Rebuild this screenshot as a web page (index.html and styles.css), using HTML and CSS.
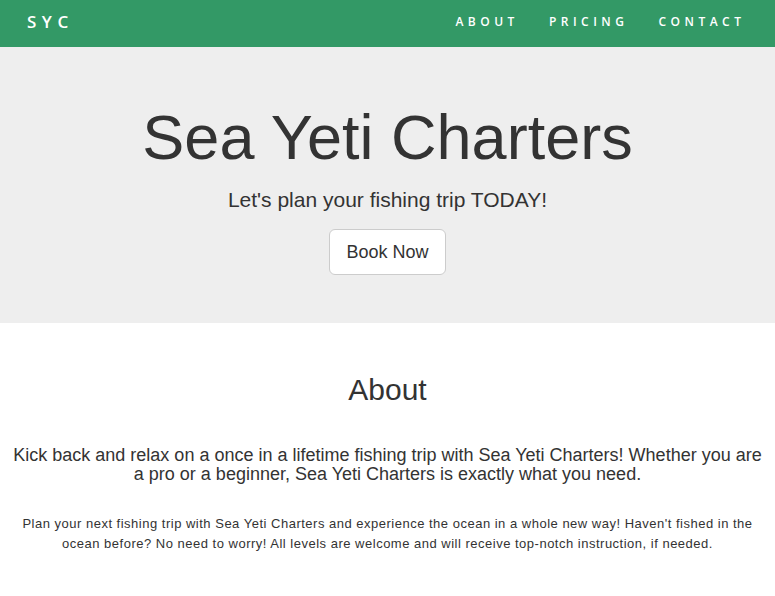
FILE: index.html
```html
<!DOCTYPE html>
<html>
<head>
<meta charset="utf-8">
<title>Sea Yeti Charters</title>
<link rel="stylesheet" href="styles.css">
</head>
<body>
<nav class="navbar">
  <a class="brand" href="#">SYC</a>
  <ul class="nav-links">
    <li><a href="#about">ABOUT</a></li>
    <li><a href="#pricing">PRICING</a></li>
    <li><a href="#contact">CONTACT</a></li>
  </ul>
</nav>
<header class="jumbotron">
  <h1 class="title">Sea Yeti Charters</h1>
  <p class="lead">Let's plan your fishing trip TODAY!</p>
  <button class="btn">Book Now</button>
</header>
<section class="about" id="about">
  <h2 class="section-title">About</h2>
  <h4 class="intro">Kick back and relax on a once in a lifetime fishing trip with Sea Yeti Charters! Whether you are a pro or a beginner, Sea Yeti Charters is exactly what you need.</h4>
  <p class="body-text">Plan your next fishing trip with Sea Yeti Charters and experience the ocean in a whole new way! Haven't fished in the ocean before? No need to worry! All levels are welcome and will receive top-notch instruction, if needed.</p>
</section>
</body>
</html>
```
FILE: styles.css
```css
* { box-sizing: border-box; }
html, body { margin: 0; padding: 0; }
body {
  font-family: "Liberation Sans", Arial, sans-serif;
  color: #333;
  background: #fff;
}
.navbar {
  height: 47px;
  background: #339966;
  display: flex;
  align-items: center;
  justify-content: space-between;
  padding: 0 14.5px 4px 27px;
}
.brand {
  color: #fff;
  text-decoration: none;
  font-family: "Open Sans", sans-serif;
  font-weight: 600;
  font-size: 17px;
  letter-spacing: 5.5px;
}
.nav-links {
  list-style: none;
  margin: 0;
  padding: 0;
  display: flex;
}
.nav-links a {
  display: block;
  padding: 0 15px;
  color: #fff;
  text-decoration: none;
  font-family: "Open Sans", sans-serif;
  font-weight: 600;
  font-size: 12px;
  letter-spacing: 4.5px;
}
.jumbotron {
  background: #eee;
  height: 276px;
  text-align: center;
  padding-top: 56px;
}
.title {
  margin: 0;
  font-size: 63px;
  font-weight: 400;
  line-height: 1.1;
}
.lead {
  margin: 13px 0 14px;
  font-size: 21px;
  line-height: 1.4;
}
.btn {
  font-family: "Liberation Sans", Arial, sans-serif;
  font-size: 18px;
  line-height: 24px;
  padding: 10px 16px;
  color: #333;
  background: #fff;
  border: 1px solid #ccc;
  border-radius: 6px;
}
.about {
  text-align: center;
  padding: 0 10px;
}
.section-title {
  margin: 50px 0 0;
  font-size: 30px;
  font-weight: 400;
  line-height: 1.1;
}
.intro {
  margin: 40px 0 0;
  font-size: 18px;
  font-weight: 400;
  line-height: 19px;
}
.body-text {
  margin: 30px 0 0;
  font-size: 13px;
  line-height: 20px;
  letter-spacing: 0.5px;
}
```
